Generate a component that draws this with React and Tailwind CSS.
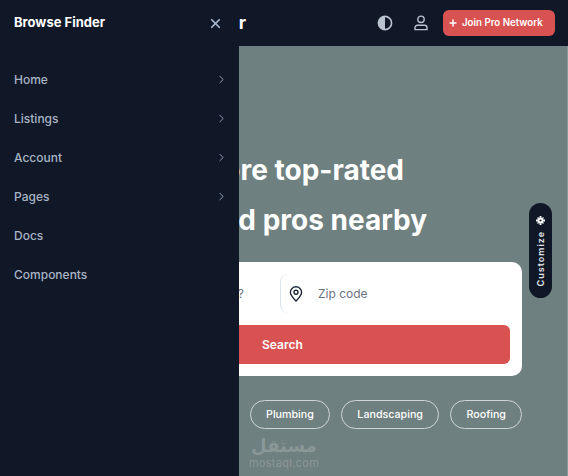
import React from "react";
import { ChevronRight, X, Plus } from "lucide-react";

const font = { fontFamily: "Inter, sans-serif" };

function NavItem({ label, arrow }) {
  return (
    <div className="flex h-[39px] items-center justify-between pr-[11px] text-[12px] font-medium text-[#a9b4c4]">
      <span>{label}</span>
      {arrow && <ChevronRight size={13} strokeWidth={1.8} className="text-[#8fa0b5]" />}
    </div>
  );
}

function Chip({ children }) {
  return (
    <span className="flex h-[29px] shrink-0 items-center rounded-full border border-[#d0d6d6] px-[15px] pt-[2px] text-[10.7px] font-medium text-white">
      {children}
    </span>
  );
}

export default function App() {
  return (
    <div className="relative flex h-[476px] w-[568px] flex-col overflow-hidden bg-[#6f8080]" style={font}>
      <header className="flex h-[46px] items-center justify-end bg-[#101828] pr-[13px]">
        <span className="mr-auto pb-[2px] pl-[190px] text-[18px] font-bold text-white">Finder</span>
        <svg width="16" height="16" viewBox="0 0 16 16" className="mr-[21px]">
          <circle cx="8" cy="8" r="6.6" fill="none" stroke="#b9c3cf" strokeWidth="1.6" />
          <path d="M8 1.4a6.6 6.6 0 0 0 0 13.2z" fill="#b9c3cf" />
        </svg>
        <svg width="14" height="16" viewBox="0 0 14 16" fill="none" stroke="#b9c3cf" strokeWidth="1.4" className="mr-[15px]">
          <circle cx="7" cy="4.3" r="3.2" />
          <path d="M3.4 10.2h7.2a2.4 2.4 0 0 1 2.4 2.4v2H1v-2a2.4 2.4 0 0 1 2.4-2.4z" />
        </svg>
        <button className="flex h-[26px] w-[112px] items-center gap-[4px] rounded-[6px] bg-[#d95252] pl-[5px] text-[9.7px] font-semibold text-white">
          <Plus size={10} strokeWidth={3.5} />
          Join Pro Network
        </button>
      </header>

      <main className="flex flex-1 flex-col items-end border-r border-[#8a9a9a] pr-[45px]">
        <h1 className="mt-[99px] w-[410px] text-right text-[28px] leading-[50px] font-bold text-white">
          <span className="block pr-[118px]">Explore top-rated</span>
          <span className="block pr-[95px]">licensed pros nearby</span>
        </h1>
        <div className="mt-[17px] w-[400px] rounded-[10px] bg-white p-[12px]">
          <div className="flex h-[39px] items-center">
            <span className="w-[146px] pr-[36px] text-right text-[12px] text-[#6b7280]">What do you need?</span>
            <div className="flex h-full flex-1 items-center gap-[15px] rounded-l-[8px] border-l border-[#dde3ea] pl-[8px]">
              <svg width="14" height="16" viewBox="0 0 14 16" fill="none" stroke="#1f2937" strokeWidth="1.4">
                <path d="M7 15C4 11.8 1.4 9.2 1.4 6.4a5.6 5.6 0 0 1 11.2 0C12.6 9.2 10 11.8 7 15z" />
                <circle cx="7" cy="6.3" r="2" />
              </svg>
              <span className="text-[12px] text-[#6b7280]">Zip code</span>
            </div>
          </div>
          <button className="mt-[12px] h-[39px] w-full rounded-[6px] bg-[#d95252] pl-[128px] text-left text-[12px] font-semibold text-white">
            Search
          </button>
        </div>
        <div className="mt-[24px] flex gap-[11.5px]">
          <Chip>Electrical</Chip>
          <Chip>Plumbing</Chip>
          <Chip>Landscaping</Chip>
          <Chip>Roofing</Chip>
        </div>
      </main>

      <div className="absolute top-[203px] left-[529px] flex h-[95px] w-[23px] flex-col items-center rounded-full bg-[#101828] pt-[12px]">
        <svg width="9" height="9" viewBox="0 0 10 10" fill="#fff" className="my-[0.5px]">
          <circle cx="5" cy="5" r="3.3" />
          <circle cx="5" cy="5" r="1.2" fill="#101828" />
          <path d="M4 0h2v2H4zM4 8h2v2H4zM0 4h2v2H0zM8 4h2v2H8zM1.2 2.2l1-1 1 1-1 1zM6.8 2.2l1-1 1 1-1 1zM1.2 7.8l1-1 1 1-1 1zM6.8 7.8l1-1 1 1-1 1z" />
        </svg>
        <span className="mt-[6px] rotate-180 text-[9px] font-semibold tracking-[1px] text-[#e5e7eb] [writing-mode:vertical-rl]">
          Customize
        </span>
      </div>

      <div className="absolute top-[434px] left-[250px] flex w-[68px] flex-col items-center leading-none text-white/20">
        <span className="text-[18px] leading-[24px] font-bold" style={{ fontFamily: '"DejaVu Sans", sans-serif' }}>مستقل</span>
        <span className="text-[11px] tracking-[0.3px]">mostaql.com</span>
      </div>

      <aside className="absolute top-0 left-0 h-full w-[239px] bg-[#101828] pl-[14px]">
        <div className="flex h-[46px] items-center justify-between pr-[16px]">
          <span className="text-[13px] font-bold text-white">Browse Finder</span>
          <X size={15} strokeWidth={2.8} className="text-[#a9b8cc]" />
        </div>
        <nav className="mt-[14px]">
          <NavItem label="Home" arrow />
          <NavItem label="Listings" arrow />
          <NavItem label="Account" arrow />
          <NavItem label="Pages" arrow />
          <NavItem label="Docs" />
          <NavItem label="Components" />
        </nav>
      </aside>
    </div>
  );
}
